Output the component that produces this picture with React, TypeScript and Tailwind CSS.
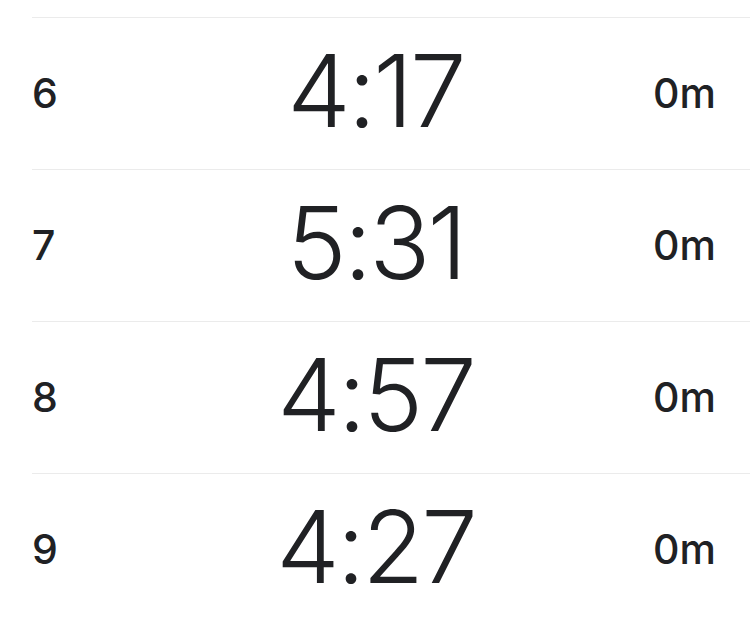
const laps = [
  { lap: 6, pace: '4:17', elev: '0m' },
  { lap: 7, pace: '5:31', elev: '0m' },
  { lap: 8, pace: '4:57', elev: '0m' },
  { lap: 9, pace: '4:27', elev: '0m' },
];

function LapRow({ lap, pace, elev }: { lap: number; pace: string; elev: string }) {
  return (
    <div className="grid h-[152px] grid-cols-[1fr_auto_1fr] items-center border-t border-[#ebebeb] pr-[34px]">
      <div className="text-[41px] font-[450] leading-none text-[#202124]">{lap}</div>
      <div className="pb-[6px] pl-[3px] text-[101px] font-[360] leading-none tracking-[-3px] text-[#202124]">
        {pace}
      </div>
      <div className="text-right text-[41px] font-[450] leading-none text-[#202124]">{elev}</div>
    </div>
  );
}

export default function App() {
  return (
    <div className="h-[618px] w-[750px] overflow-hidden bg-white font-['Inter',sans-serif]">
      <div className="h-[17px]" />
      <div className="ml-[32px]">
        {laps.map((l) => (
          <LapRow key={l.lap} {...l} />
        ))}
      </div>
    </div>
  );
}
